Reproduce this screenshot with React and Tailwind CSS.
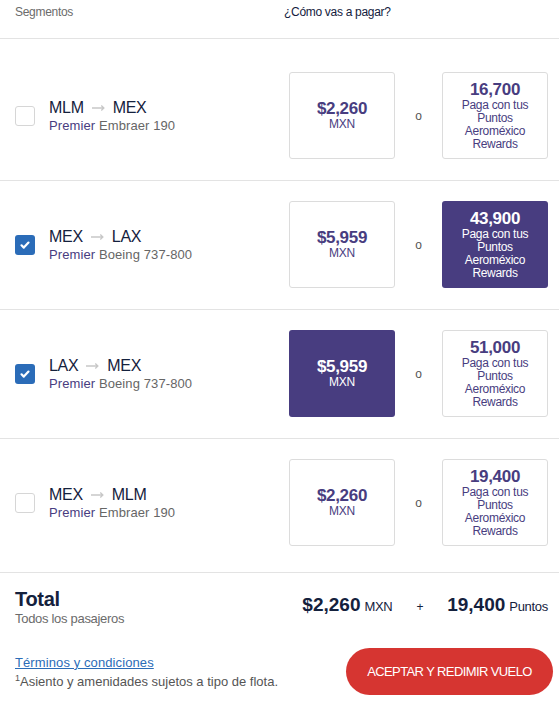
const segments = [
  { from: "MLM", to: "MEX", plane: "Embraer 190", price: "$2,260", points: "16,700", checked: false, pick: null },
  { from: "MEX", to: "LAX", plane: "Boeing 737-800", price: "$5,959", points: "43,900", checked: true, pick: "points" },
  { from: "LAX", to: "MEX", plane: "Boeing 737-800", price: "$5,959", points: "51,000", checked: true, pick: "cash" },
  { from: "MEX", to: "MLM", plane: "Embraer 190", price: "$2,260", points: "19,400", checked: false, pick: null },
];

function Checkbox({ checked }) {
  if (checked) {
    return (
      <span className="flex h-5 w-5 shrink-0 items-center justify-center rounded-[3px] bg-[#2b6cb8]">
        <svg viewBox="0 0 12 12" className="h-3 w-3" fill="none" stroke="white" strokeWidth="2.2" strokeLinecap="round" strokeLinejoin="round">
          <path d="M2.5 6.3l2.3 2.3 4.7-5" />
        </svg>
      </span>
    );
  }
  return <span className="h-5 w-5 shrink-0 rounded-[3px] border border-[#d6d6d6] bg-white" />;
}

function Option({ active, children }) {
  return (
    <div
      className={
        "flex h-[87px] w-[106px] flex-col items-center justify-center rounded-[3px] text-center " +
        (active ? "bg-[#483d80] text-white" : "border border-[#dcdcdc] bg-white text-[#483d80]")
      }
    >
      {children}
    </div>
  );
}

function SegmentRow({ seg, first, last }) {
  return (
    <div
      className={
        "flex items-center border-b border-[#e3e3e3] " +
        (first ? "pt-[33px] " : "pt-5 ") +
        (last ? "pb-[26px]" : "pb-[21px]")
      }
    >
      <div className="flex flex-1 items-center gap-[14px] pl-[15px]">
        <Checkbox checked={seg.checked} />
        <div>
          <div className="flex items-center gap-[8px] text-[16px] leading-5 text-[#14213d]">
            <span>{seg.from}</span>
            <svg viewBox="0 0 14 8" className="h-2 w-[13px]" fill="none" stroke="#c8c8c8" strokeWidth="1.4">
              <path d="M0 4h12.5M10 1.3l2.8 2.7-2.8 2.7" />
            </svg>
            <span>{seg.to}</span>
          </div>
          <div className="text-[13px] leading-4 tracking-[0.1px] text-[#666]">
            <span className="text-[#483d80]">Premier</span> {seg.plane}
          </div>
        </div>
      </div>
      <div className="flex items-center pr-[11px]">
        <Option active={seg.pick === "cash"}>
          <span className="text-[17px] font-bold leading-[18px]">{seg.price}</span>
          <span className="text-[12px] leading-[13px]">MXN</span>
        </Option>
        <span className="w-[47px] text-center text-[12px] text-[#555]">o</span>
        <Option active={seg.pick === "points"}>
          <span className="text-[17px] font-bold leading-[18px]">{seg.points}</span>
          <span className="px-2 text-[12px] leading-[13px]">Paga con tus Puntos Aeroméxico Rewards</span>
        </Option>
      </div>
    </div>
  );
}

export default function App() {
  return (
    <div className="min-h-screen w-[559px] bg-white font-['Liberation_Sans',sans-serif] tracking-[-0.3px]">
      <div className="flex h-[39px] border-b border-[#e3e3e3] pt-[3px] text-[12px]">
        <span className="w-[284px] pl-[15px] text-[#6b6b6b]">Segmentos</span>
        <span className="text-[#14213d]">¿Cómo vas a pagar?</span>
      </div>

      {segments.map((seg, i) => (
        <SegmentRow key={i} seg={seg} first={i === 0} last={i === segments.length - 1} />
      ))}

      <div className="flex items-start justify-between px-[15px] pt-[14px]">
        <div>
          <div className="text-[20px] font-bold leading-6 text-[#14213d]">Total</div>
          <div className="text-[13px] leading-4 text-[#6b6b6b]">Todos los pasajeros</div>
        </div>
        <div className="-mr-1 flex items-baseline pt-[4px] text-[#14213d]">
          <span className="text-[19px] font-bold tracking-normal">$2,260</span>
          <span className="ml-1 text-[13px]">MXN</span>
          <span className="mx-[24px] text-[12px]">+</span>
          <span className="text-[19px] font-bold tracking-normal">19,400</span>
          <span className="ml-1 text-[13px]">Puntos</span>
        </div>
      </div>

      <div className="flex items-center justify-between pl-[15px] pr-[6px] pt-[21px]">
        <div className="text-[13px] leading-[19px] tracking-normal">
          <a href="#" className="tracking-[0.1px] text-[#2b6cb8] underline">Términos y condiciones</a>
          <div className="text-[#555]">
            <sup className="text-[9px]">1</sup>Asiento y amenidades sujetos a tipo de flota.
          </div>
        </div>
        <button className="h-[47px] w-[207px] rounded-full bg-[#d63531] text-[13px] tracking-[-0.6px] text-white">
          ACEPTAR Y REDIMIR VUELO
        </button>
      </div>
    </div>
  );
}
